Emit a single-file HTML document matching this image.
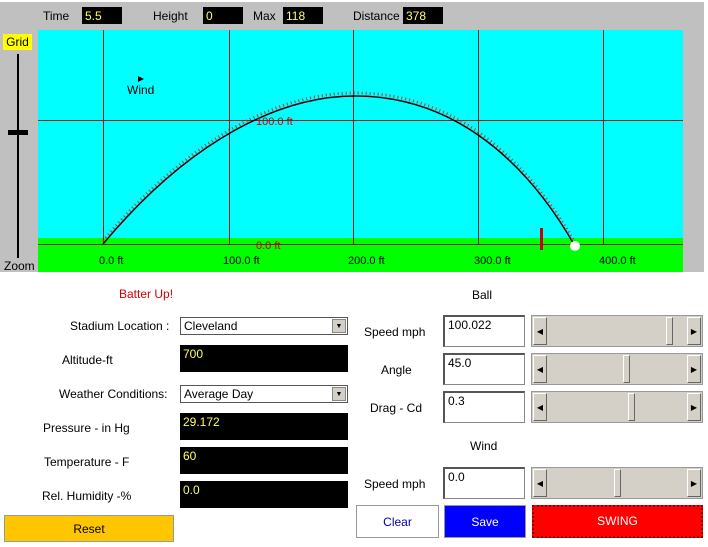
<!DOCTYPE html>
<html><head><style>
*{margin:0;padding:0;box-sizing:border-box}
body{width:708px;height:547px;background:#fff;position:relative;font-family:"Liberation Sans",Arial,sans-serif;font-size:12px;color:#000;overflow:hidden}
.a{position:absolute}
.lbl{position:absolute;white-space:nowrap}
.blk{position:absolute;background:#000;color:#ff6;padding:2px 3px;font-size:12px}
.txt{position:absolute;background:#fff;border:1px solid #888;border-top:2px solid #555;border-left:2px solid #555;padding:1px 3px;font-size:12px}
.sel{position:absolute;background:#fff;border:1px solid #555;padding:1px 3px;font-size:12px}
.dd{position:absolute;right:1px;top:1px;width:14px;height:14px;background:#d4d0c8;border:1px solid #888;font-size:7px;text-align:center;line-height:13px}
.sl{position:absolute;background:#d4d0c8;border:1px solid #999}
.sl .b{position:absolute;top:1px;bottom:1px;width:14px;background:#d4d0c8;border:1px solid #fff;border-right-color:#666;border-bottom-color:#666;font-size:8px;text-align:center}
.sl .t{position:absolute;top:1px;bottom:1px;width:7px;background:#d4d0c8;border:1px solid #fff;border-right-color:#666;border-bottom-color:#666}
.btn{position:absolute;text-align:center;font-size:12px}
</style></head><body>
<div class="a" style="left:0;top:2px;width:704px;height:270px;background:#c0c0c0"></div>
<div class="lbl" style="left:43px;top:9px">Time</div>
<div class="blk" style="left:82px;top:7px;width:40px;height:17px">5.5</div>
<div class="lbl" style="left:153px;top:9px">Height</div>
<div class="blk" style="left:203px;top:7px;width:40px;height:17px">0</div>
<div class="lbl" style="left:253px;top:9px">Max</div>
<div class="blk" style="left:283px;top:7px;width:40px;height:17px">118</div>
<div class="lbl" style="left:353px;top:9px">Distance</div>
<div class="blk" style="left:403px;top:7px;width:40px;height:17px">378</div>
<div class="a" style="left:3px;top:34px;width:29px;height:16px;background:#ff0;text-align:center;font-size:12px;line-height:16px">Grid</div>
<div class="a" style="left:17px;top:54px;width:2px;height:204px;background:#000"></div>
<div class="a" style="left:8px;top:130px;width:20px;height:5px;background:#000"></div>
<div class="lbl" style="left:4px;top:259px">Zoom</div>
<svg class="a" style="left:38px;top:30px" width="645" height="242" viewBox="38 30 645 242">
<rect x="38" y="30" width="645" height="208" fill="#0ff"/>
<rect x="38" y="238" width="645" height="34" fill="#0f0"/>
<g stroke="#8b1a1a" stroke-width="1">
<line x1="103.5" y1="30" x2="103.5" y2="244"/><line x1="229.5" y1="30" x2="229.5" y2="244"/>
<line x1="353.5" y1="30" x2="353.5" y2="244"/><line x1="478.5" y1="30" x2="478.5" y2="244"/>
<line x1="603.5" y1="30" x2="603.5" y2="244"/>
<line x1="38" y1="120.5" x2="683" y2="120.5"/><line x1="38" y1="244.5" x2="683" y2="244.5"/>
</g>
<path d="M103 244 C190 140 280 96 355 96 C445 96 520 150 575 246" fill="none" stroke="#000" stroke-width="1.5"/>
<path d="M103 241 C190 137 280 93 355 93 C445 93 520 147 575 243" fill="none" stroke="#c33" stroke-width="3" stroke-dasharray="1 3"/>
<rect x="540" y="228" width="3" height="22" fill="#c00"/>
<circle cx="575" cy="246" r="5" fill="#fff"/>
<path d="M138 76 L144 79 L138 82Z" fill="#000"/>
<text x="127" y="94" font-family="Liberation Sans" font-size="12">Wind</text>
<text x="256" y="125" font-family="Liberation Sans" font-size="11" fill="#c00">100.0 ft</text>
<text x="256" y="249" font-family="Liberation Sans" font-size="11" fill="#c00">0.0 ft</text>
<g font-family="Liberation Sans" font-size="11"><text x="99" y="264">0.0 ft</text><text x="223" y="264">100.0 ft</text><text x="348" y="264">200.0 ft</text><text x="474" y="264">300.0 ft</text><text x="599" y="264">400.0 ft</text></g>
</svg>
<div class="lbl" style="left:119px;top:287px;color:#c00">Batter Up!</div>
<div class="lbl" style="left:70px;top:319px">Stadium Location :</div>
<div class="sel" style="left:180px;top:317px;width:168px;height:18px">Cleveland<div class="dd">▼</div></div>
<div class="lbl" style="left:62px;top:353px">Altitude-ft</div>
<div class="blk" style="left:180px;top:345px;width:168px;height:27px">700</div>
<div class="lbl" style="left:59px;top:387px">Weather Conditions:</div>
<div class="sel" style="left:180px;top:385px;width:168px;height:18px">Average Day<div class="dd">▼</div></div>
<div class="lbl" style="left:43px;top:421px">Pressure - in Hg</div>
<div class="blk" style="left:180px;top:413px;width:168px;height:27px">29.172</div>
<div class="lbl" style="left:44px;top:455px">Temperature - F</div>
<div class="blk" style="left:180px;top:447px;width:168px;height:27px">60</div>
<div class="lbl" style="left:42px;top:489px">Rel. Humidity -%</div>
<div class="blk" style="left:180px;top:481px;width:168px;height:27px">0.0</div>
<div class="btn" style="left:4px;top:515px;width:170px;height:27px;background:#ffc600;border:1px solid #999;line-height:26px">Reset</div>
<div class="lbl" style="left:472px;top:288px">Ball</div>
<div class="lbl" style="left:364px;top:325px">Speed mph</div>
<div class="txt" style="left:443px;top:315px;width:82px;height:32px">100.022</div>
<div class="sl" style="left:531px;top:315px;width:172px;height:32px"><div class="b" style="left:1px;line-height:28px">◀</div><div class="t" style="left:134px"></div><div class="b" style="right:1px;line-height:28px">▶</div></div>
<div class="lbl" style="left:381px;top:363px">Angle</div>
<div class="txt" style="left:443px;top:353px;width:82px;height:32px">45.0</div>
<div class="sl" style="left:531px;top:353px;width:172px;height:32px"><div class="b" style="left:1px;line-height:28px">◀</div><div class="t" style="left:91px"></div><div class="b" style="right:1px;line-height:28px">▶</div></div>
<div class="lbl" style="left:370px;top:401px">Drag - Cd</div>
<div class="txt" style="left:443px;top:391px;width:82px;height:32px">0.3</div>
<div class="sl" style="left:531px;top:391px;width:172px;height:32px"><div class="b" style="left:1px;line-height:28px">◀</div><div class="t" style="left:96px"></div><div class="b" style="right:1px;line-height:28px">▶</div></div>
<div class="lbl" style="left:470px;top:439px">Wind</div>
<div class="lbl" style="left:364px;top:477px">Speed mph</div>
<div class="txt" style="left:443px;top:467px;width:82px;height:32px">0.0</div>
<div class="sl" style="left:531px;top:467px;width:172px;height:32px"><div class="b" style="left:1px;line-height:28px">◀</div><div class="t" style="left:82px"></div><div class="b" style="right:1px;line-height:28px">▶</div></div>
<div class="btn" style="left:356px;top:505px;width:83px;height:33px;background:#fff;border:1px solid #999;color:#00a;line-height:32px">Clear</div>
<div class="btn" style="left:444px;top:505px;width:82px;height:33px;background:#00f;border:1px solid #999;color:#fff;line-height:32px">Save</div>
<div class="btn" style="left:532px;top:505px;width:171px;height:33px;background:#f00;border:2px dotted #800;color:#fff;line-height:29px">SWING</div>
</body></html>
